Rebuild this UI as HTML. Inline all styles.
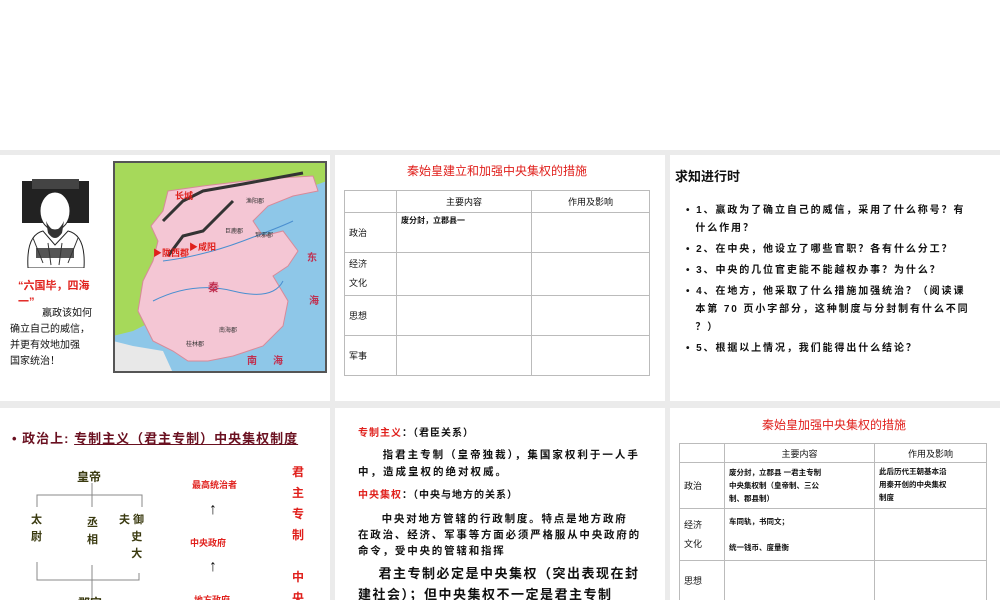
<!DOCTYPE html>
<html><head><meta charset="utf-8">
<style>
*{margin:0;padding:0;box-sizing:border-box}
body{width:1000px;height:600px;background:#fff;position:relative;overflow:hidden;font-family:"Liberation Sans","Noto Sans CJK SC",sans-serif;color:#111}
.grid{position:absolute;left:0;top:150px;width:1000px;height:450px;background:#ebebeb}
.p{position:absolute;background:#fff;overflow:hidden}
.a{position:absolute;white-space:nowrap}
table{border-collapse:collapse;position:absolute}
td{border:1px solid #bbb;font-size:9px;vertical-align:middle;padding:2px 4px}
.red{color:#e0201c}
</style></head><body>
<div class="grid"></div>

<div class="p" style="left:0;top:155px;width:330px;height:246px">
  <svg class="a" style="left:18px;top:18px" width="75" height="95" viewBox="0 0 75 95">
    <rect x="4" y="8" width="67" height="42" fill="#222"/>
    <rect x="14" y="6" width="47" height="10" fill="#444"/>
    <ellipse cx="37" cy="38" rx="15" ry="19" fill="#fff" stroke="#222"/>
    <path d="M28 48 Q37 66 46 48 L44 60 Q37 70 30 60Z" fill="#333"/>
    <path d="M10 95 Q8 62 25 58 L37 72 L50 58 Q68 62 66 95Z" fill="#fff" stroke="#222"/>
    <path d="M18 75 h38 v10 h-38z" fill="#555"/>
    <path d="M15 65 L25 90 M60 65 L50 90 M30 70 L33 92 M44 70 L41 92" stroke="#333"/>
  </svg>
  <div class="a red" style="left:18px;top:122px;font-size:11px;font-weight:bold">“六国毕，四海</div>
  <div class="a red" style="left:18px;top:138px;font-size:11px;font-weight:bold">一”</div>
  <div class="a" style="left:42px;top:151px;font-size:10px;line-height:16px">嬴政该如何</div>
  <div class="a" style="left:10px;top:167px;font-size:10px;line-height:16px">确立自己的威信，<br>并更有效地加强<br>国家统治！</div>
  <svg class="a" style="left:113px;top:6px" width="214" height="212" viewBox="0 0 214 212">
    <rect width="214" height="212" fill="#8ec7e8"/>
    <path d="M0 0 H214 V20 L200 25 L150 35 L130 50 L110 80 L80 110 L60 140 L40 160 L20 170 L0 175Z" fill="#a6d95a"/>
    <path d="M0 180 L0 212 L60 212 L50 190 L20 185Z" fill="#e8e8e8"/>
    <path d="M55 30 L90 25 L150 18 L200 15 L205 30 L180 35 L155 45 L140 60 L150 75 L170 70 L185 90 L175 105 L160 115 L175 140 L170 165 L150 185 L120 195 L95 200 L75 200 L60 190 L40 180 L25 150 L30 120 L40 100 L45 80 L38 65 L50 50Z" fill="#f4c6d4" stroke="#d78a99"/>
    <path d="M55 95 L70 75 L90 70 L105 55 L120 40 M50 60 L70 40 L90 30 L130 23 L190 12" stroke="#333" stroke-width="3" fill="none"/>
    <path d="M40 140 Q80 120 120 130 T170 120 M50 100 Q90 95 130 80 T180 60" stroke="#4a8fd0" stroke-width="1" fill="none"/>
    <rect x="1" y="1" width="212" height="210" fill="none" stroke="#555" stroke-width="2"/>
    <text x="62" y="38" font-size="9" fill="#e0201c" font-weight="bold">长城</text>
    <text x="40" y="95" font-size="9" fill="#e0201c" font-weight="bold">▶陇西郡</text>
    <text x="76" y="89" font-size="9" fill="#e0201c" font-weight="bold">▶咸阳</text>
    <text x="95" y="130" font-size="11" fill="#c03050" font-weight="bold">秦</text>
    <text x="194" y="100" font-size="10" fill="#c03050" font-weight="bold">东</text>
    <text x="196" y="143" font-size="10" fill="#c03050" font-weight="bold">海</text>
    <text x="134" y="203" font-size="10" fill="#c03050" font-weight="bold">南</text>
    <text x="160" y="203" font-size="10" fill="#c03050" font-weight="bold">海</text>
    <text x="133" y="42" font-size="6" fill="#333">渔阳郡</text>
    <text x="112" y="72" font-size="6" fill="#333">巨鹿郡</text>
    <text x="142" y="76" font-size="6" fill="#333">琅邪郡</text>
    <text x="106" y="171" font-size="6" fill="#333">南海郡</text>
    <text x="73" y="185" font-size="6" fill="#333">桂林郡</text>
  </svg>
</div>

<div class="p" style="left:335px;top:155px;width:330px;height:246px">
  <div class="a red" style="left:72px;top:7px;font-size:12px">秦始皇建立和加强中央集权的措施</div>
  <table style="left:9px;top:35px;width:306px">
    <tr style="height:22px"><td style="width:52px"></td><td style="width:135px;text-align:center">主要内容</td><td style="text-align:center">作用及影响</td></tr>
    <tr style="height:40px"><td>政治</td><td style="vertical-align:top;font-size:8px;font-weight:bold">废分封，立郡县一</td><td></td></tr>
    <tr style="height:40px"><td style="line-height:19px">经济<br>文化</td><td></td><td></td></tr>
    <tr style="height:40px"><td>思想</td><td></td><td></td></tr>
    <tr style="height:40px"><td>军事</td><td></td><td></td></tr>
  </table>
</div>

<div class="p" style="left:670px;top:155px;width:330px;height:246px">
  <div class="a" style="left:5px;top:11px;font-size:13px;font-weight:bold">求知进行时</div>
  <div class="a" style="left:16px;top:47px;font-size:10px;letter-spacing:1.9px;line-height:18px;font-weight:bold">
    <div>• 1、嬴政为了确立自己的威信，采用了什么称号？有<br>&nbsp;&nbsp;什么作用？</div>
    <div style="margin-top:3px">• 2、在中央，他设立了哪些官职？各有什么分工？</div>
    <div style="margin-top:3px">• 3、中央的几位官吏能不能越权办事？为什么？</div>
    <div style="margin-top:3px">• 4、在地方，他采取了什么措施加强统治？（阅读课<br>&nbsp;&nbsp;本第 70 页小字部分，这种制度与分封制有什么不同<br>&nbsp;&nbsp;？）</div>
    <div style="margin-top:3px">• 5、根据以上情况，我们能得出什么结论？</div>
  </div>
</div>

<div class="p" style="left:0;top:408px;width:330px;height:192px">
  <div class="a" style="left:12px;top:20px;font-size:13px;letter-spacing:1px;color:#6a1020;font-weight:bold">• 政治上: <span style="text-decoration:underline">专制主义（君主专制）中央集权制度</span></div>
  <div class="a" style="left:77px;top:60px;font-size:12px;color:#3a3a10;font-weight:bold">皇帝</div>
  <svg class="a" style="left:0;top:0" width="200" height="192"><path d="M92 75V99M37 99V87H142V99M37 154V172H139V165M92 157V192" stroke="#888" fill="none"/></svg>
  <div class="a" style="left:31px;top:104px;font-size:11px;line-height:17px;color:#3a3a10;font-weight:bold">太<br>尉</div>
  <div class="a" style="left:87px;top:107px;font-size:11px;line-height:17px;color:#3a3a10;font-weight:bold">丞<br>相</div>
  <div class="a" style="left:119px;top:104px;font-size:11px;line-height:17px;color:#3a3a10;font-weight:bold">夫 御<br>&nbsp;&nbsp;&nbsp;&nbsp;史<br>&nbsp;&nbsp;&nbsp;&nbsp;大</div>
  <div class="a" style="left:78px;top:186px;font-size:12px;color:#3a3a10;font-weight:bold">郡守</div>
  <div class="a red" style="left:192px;top:70px;font-size:9px;font-weight:bold">最高统治者</div>
  <div class="a" style="left:209px;top:93px;font-size:16px;font-weight:bold">↑</div>
  <div class="a red" style="left:190px;top:128px;font-size:9px;font-weight:bold">中央政府</div>
  <div class="a" style="left:209px;top:150px;font-size:16px;font-weight:bold">↑</div>
  <div class="a red" style="left:194px;top:185px;font-size:9px;font-weight:bold">地方政府</div>
  <div class="a red" style="left:292px;top:54px;font-size:12px;line-height:21px;font-weight:bold">君<br>主<br>专<br>制<br><br>中<br>央<br>集</div>
</div>

<div class="p" style="left:335px;top:408px;width:330px;height:192px">
  <div class="a" style="left:23px;top:16px;font-size:10px;font-weight:bold;letter-spacing:1px"><span class="red">专制主义</span>：（君臣关系）</div>
  <div class="a" style="left:23px;top:39px;font-size:10.5px;letter-spacing:2px;line-height:17px;font-weight:bold">&nbsp;&nbsp;&nbsp;&nbsp;&nbsp;指君主专制（皇帝独裁），集国家权利于一人手<br>中，造成皇权的绝对权威。</div>
  <div class="a" style="left:23px;top:78px;font-size:10px;font-weight:bold;letter-spacing:1px"><span class="red">中央集权</span>：（中央与地方的关系）</div>
  <div class="a" style="left:23px;top:103px;font-size:10.5px;letter-spacing:1.8px;line-height:16px;font-weight:bold">&nbsp;&nbsp;&nbsp;&nbsp;&nbsp;中央对地方管辖的行政制度。特点是地方政府<br>在政治、经济、军事等方面必须严格服从中央政府的<br>命令，受中央的管辖和指挥</div>
  <div class="a" style="left:23px;top:155px;font-size:13px;letter-spacing:1.5px;line-height:21px;font-weight:bold">&nbsp;&nbsp;&nbsp;&nbsp;君主专制必定是中央集权（突出表现在封<br>建社会）；但中央集权不一定是君主专制</div>
</div>

<div class="p" style="left:670px;top:408px;width:330px;height:192px">
  <div class="a red" style="left:92px;top:8px;font-size:12px">秦始皇加强中央集权的措施</div>
  <table style="left:9px;top:35px;width:308px">
    <tr style="height:19px"><td style="width:45px"></td><td style="width:150px;text-align:center">主要内容</td><td style="text-align:center">作用及影响</td></tr>
    <tr style="height:46px"><td>政治</td><td style="font-size:7.5px;font-weight:bold;line-height:13px">废分封，立郡县 一君主专制<br>中央集权制（皇帝制、三公<br>制、郡县制）</td><td style="font-size:7.5px;font-weight:bold;line-height:13px;vertical-align:top">此后历代王朝基本沿<br>用秦开创的中央集权<br>制度</td></tr>
    <tr style="height:52px"><td style="line-height:19px">经济<br>文化</td><td style="font-size:7.5px;font-weight:bold;line-height:13px">车同轨，书同文；<br><br>统一钱币、度量衡</td><td></td></tr>
    <tr style="height:40px"><td>思想</td><td></td><td></td></tr>
  </table>
</div>
</body></html>
